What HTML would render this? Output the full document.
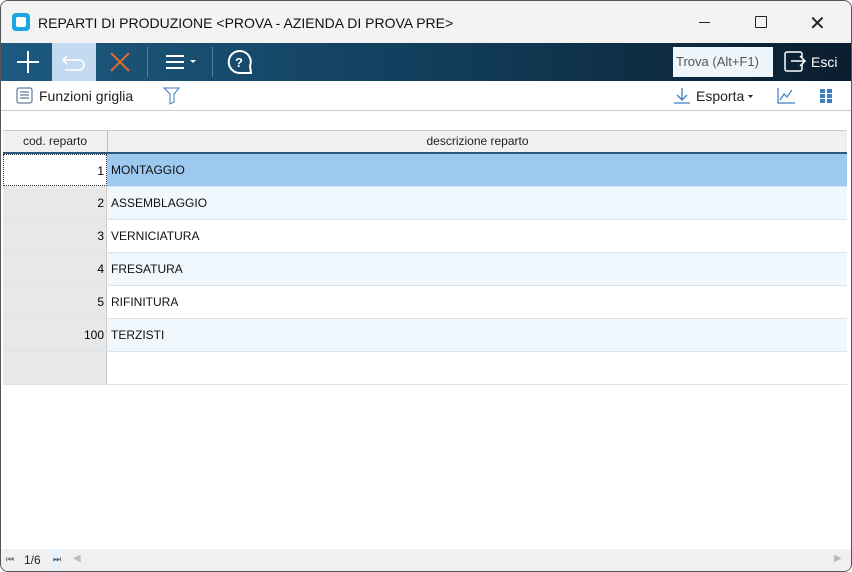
<!DOCTYPE html><html><head><style>
body{margin:0;width:852px;height:572px;background:#fff;font-family:"Liberation Sans",sans-serif;overflow:hidden;position:relative}
.win{position:absolute;left:0;top:0;width:850px;height:570px;border:1px solid #555;border-radius:8px;overflow:hidden;background:#fff}
.title{position:absolute;left:0;top:0;width:850px;height:42px;background:#f3f3f3;font-size:14px;color:#111}
.tb{position:absolute;top:42px;left:0;width:850px;height:38px;background:linear-gradient(90deg,#1d5a80,#123e5c 50%,#0b1d2e)}
.row{position:absolute;left:2px;width:844px;height:32px;border-bottom:1px solid #dde3ea;font-size:12px}
.row .c{position:absolute;left:0;top:0;width:104px;height:32px;background:#e8e8e8;border-right:1px solid #ccc;text-align:right;line-height:33px;padding-right:2px;box-sizing:border-box}
.row .d{position:absolute;left:108px;top:0;line-height:33px;color:#111}
</style></head><body><div class="win">
<div class="title">
<div style="position:absolute;left:11px;top:12px;width:18px;height:18px;background:#1aa6e0;border-radius:4px"><div style="position:absolute;left:4px;top:4px;width:10px;height:10px;background:#fff;border-radius:2px"></div></div>
<div style="position:absolute;left:37px;top:14px">REPARTI DI PRODUZIONE &lt;PROVA - AZIENDA DI PROVA PRE&gt;</div>
<div style="position:absolute;left:698px;top:21px;width:11px;height:1px;background:#222"></div>
<div style="position:absolute;left:754px;top:15px;width:10px;height:10px;border:1px solid #222;border-radius:1px"></div>
<div style="position:absolute;left:808px;top:10px;font-size:20px;color:#222">✕</div>
</div>
<div class="tb">
<svg width="850" height="38" style="position:absolute;left:0;top:0">
<path d="M16 19h22M27 8v22" stroke="#fff" stroke-width="2"/>
<rect x="51" y="0" width="44" height="38" fill="#c4daf0"/>
<path d="M66 13l-4 4 4 4M62 17h16a5 5 0 0 1 0 10h-14" stroke="#fff" stroke-width="1.5" fill="none"/>
<path d="M110 10l18 18M128 10l-18 18" stroke="#e06a2a" stroke-width="2"/>
<line x1="146.5" y1="4" x2="146.5" y2="34" stroke="#5a7d98"/>
<path d="M165 13h18M165 19h18M165 25h18" stroke="#fff" stroke-width="2"/><path d="M189 17h6l-3 3z" fill="#fff"/>
<line x1="211.5" y1="4" x2="211.5" y2="34" stroke="#5a7d98"/>
<path d="M239 30a11 11 0 1 1 10-7l1 7z" stroke="#fff" stroke-width="2" fill="none"/>
<text x="234" y="24" fill="#fff" font-size="13" font-weight="bold" font-family="Liberation Sans">?</text>
<rect x="784" y="9" width="17" height="19" rx="2" stroke="#fff" stroke-width="1.5" fill="none"/>
<path d="M790 18h14M799 13l5 5-5 5" stroke="#fff" stroke-width="1.5" fill="#0b1d2e"/>
</svg>
<div style="position:absolute;left:672px;top:4px;width:100px;height:30px;background:#eef6fc;font-size:13px;color:#555;line-height:30px;padding-left:3px;box-sizing:border-box">Trova (Alt+F1)</div>
<div style="position:absolute;left:810px;top:11px;color:#fff;font-size:14px">Esci</div>
</div>
<div style="position:absolute;top:81px;left:0;width:850px;height:28px;border-bottom:1px solid #ccc;font-size:14px;color:#222">
<svg width="850" height="28" style="position:absolute;left:0;top:0">
<rect x="16" y="6" width="15" height="15" rx="2" stroke="#3a5f85" fill="#fff"/><path d="M19 10h9M19 13h9M19 16h9" stroke="#3a5f85"/>
<path d="M163 6h15l-5 6v8l-4 2v-10z" stroke="#3a7fc0" fill="none"/>
<path d="M681 6v12M676 13l5 5 5-5M673 21h16" stroke="#3a7fc0" stroke-width="1.3" fill="none"/>
<path d="M747 13h5l-2.5 3z" fill="#222"/>
<path d="M777 6v15h17M779 18l4-6 3 3 5-7" stroke="#3a7fc0" stroke-width="1.2" fill="none"/>
<rect x="819" y="7" width="5" height="4" fill="#3a7fc0"/><rect x="826" y="7" width="5" height="4" fill="#3a7fc0"/><rect x="819" y="12" width="5" height="4" fill="#3a7fc0"/><rect x="826" y="12" width="5" height="4" fill="#3a7fc0"/><rect x="819" y="17" width="5" height="4" fill="#3a7fc0"/><rect x="826" y="17" width="5" height="4" fill="#3a7fc0"/>
</svg>
<div style="position:absolute;left:38px;top:6px">Funzioni griglia</div>
<div style="position:absolute;left:695px;top:6px">Esporta</div>
</div>
<div style="position:absolute;top:129px;left:2px;width:844px;height:21px;background:#f0f0f0;border-top:1px solid #ccc;border-bottom:2px solid #2a5a82;font-size:12px;color:#222">
<div style="position:absolute;left:0;width:104px;height:21px;border-right:1px solid #bbb;text-align:center;line-height:21px">cod. reparto</div>
<div style="position:absolute;left:105px;right:0;text-align:center;line-height:21px">descrizione reparto</div>
</div>
<div class="row" style="top:153px;background:#9dc9f0"><div class="c" style="background:#fff;border:1px dotted #333">1</div><div class="d">MONTAGGIO</div></div>
<div class="row" style="top:186px;background:#f0f7fd"><div class="c">2</div><div class="d">ASSEMBLAGGIO</div></div>
<div class="row" style="top:219px"><div class="c">3</div><div class="d">VERNICIATURA</div></div>
<div class="row" style="top:252px;background:#f0f7fd"><div class="c">4</div><div class="d">FRESATURA</div></div>
<div class="row" style="top:285px"><div class="c">5</div><div class="d">RIFINITURA</div></div>
<div class="row" style="top:318px;background:#f0f7fd"><div class="c">100</div><div class="d">TERZISTI</div></div>
<div class="row" style="top:351px"><div class="c"></div></div>
<div style="position:absolute;top:548px;left:0;width:850px;height:22px;background:#f0f0f0;font-size:12px;color:#222">
<div style="position:absolute;left:5px;top:5px;font-size:9px;color:#666">⏮</div>
<div style="position:absolute;left:23px;top:4px">1/6</div>
<div style="position:absolute;left:50px;top:0;width:10px;height:22px;background:#e6f1fa"></div>
<div style="position:absolute;left:52px;top:5px;font-size:9px;color:#556">⏭</div>
<div style="position:absolute;left:72px;top:4px;font-size:10px;color:#bbb">◀</div>
<div style="position:absolute;left:833px;top:4px;font-size:10px;color:#bbb">▶</div>
</div>
</div></body></html>
